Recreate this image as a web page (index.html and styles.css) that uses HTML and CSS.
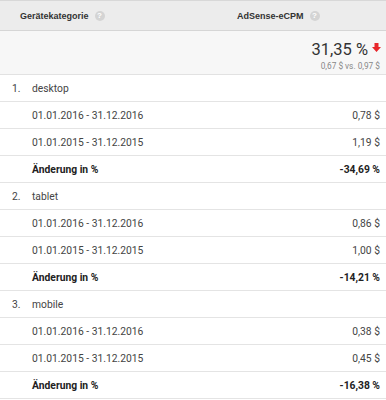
FILE: index.html
```html
<!DOCTYPE html>
<html>
<head>
<meta charset="utf-8">
<link rel="stylesheet" href="styles.css">
</head>
<body>
<div class="table">
  <div class="head">
    <div class="hcell h1">Gerätekategorie <span class="help">?</span></div>
    <div class="hcell h2">AdSense-eCPM <span class="help">?</span></div>
  </div>
  <div class="summary">
    <div class="big">31,35 % <svg class="arrow" width="9" height="9" viewBox="0 0 9 9"><path d="M2.5 0H6.5V4H9L4.5 9L0 4H2.5Z" fill="#e8262b"/></svg></div>
    <div class="small">0,67 $ vs. 0,97 $</div>
  </div>

  <div class="row"><span class="num">1.</span><span class="label">desktop</span></div>
  <div class="row"><span class="label">01.01.2016 - 31.12.2016</span><span class="val">0,78 $</span></div>
  <div class="row"><span class="label">01.01.2015 - 31.12.2015</span><span class="val">1,19 $</span></div>
  <div class="row bold"><span class="label">Änderung in %</span><span class="val">-34,69 %</span></div>

  <div class="row"><span class="num">2.</span><span class="label">tablet</span></div>
  <div class="row"><span class="label">01.01.2016 - 31.12.2016</span><span class="val">0,86 $</span></div>
  <div class="row"><span class="label">01.01.2015 - 31.12.2015</span><span class="val">1,00 $</span></div>
  <div class="row bold"><span class="label">Änderung in %</span><span class="val">-14,21 %</span></div>

  <div class="row"><span class="num">3.</span><span class="label">mobile</span></div>
  <div class="row"><span class="label">01.01.2016 - 31.12.2016</span><span class="val">0,38 $</span></div>
  <div class="row"><span class="label">01.01.2015 - 31.12.2015</span><span class="val">0,45 $</span></div>
  <div class="row bold"><span class="label">Änderung in %</span><span class="val">-16,38 %</span></div>
</div>
</body>
</html>
```
FILE: styles.css
```css
html, body {
  margin: 0;
  padding: 0;
  background: #fff;
}
body {
  font-family: Roboto, "Liberation Sans", Arial, sans-serif;
  color: #444;
  width: 386px;
  overflow: hidden;
}
.head {
  display: flex;
  height: 29px;
  align-items: center;
  background: #ececec;
  border-top: 1px solid #d8d8d8;
  border-bottom: 1px solid #d6d6d6;
}
.hcell {
  font-family: Arial, "Liberation Sans", sans-serif;
  font-weight: bold;
  font-size: 9px;
  color: #333;
  display: flex;
  align-items: center;
}
.h1 {
  padding-left: 20px;
  width: 217px;
}
.help {
  display: inline-flex;
  align-items: center;
  justify-content: center;
  width: 10px;
  height: 10px;
  border-radius: 50%;
  background: #d4d4d4;
  color: #fff;
  font-size: 8px;
  margin-left: 6px;
}
.summary {
  height: 43px;
  background: #f7f7f7;
  border-bottom: 1px solid #e2e2e2;
  display: flex;
  flex-direction: column;
  align-items: flex-end;
  padding-right: 5px;
}
.big {
  font-size: 16.5px;
  color: #333;
  margin-top: 9px;
  line-height: 19px;
  display: flex;
  align-items: center;
}
.arrow {
  margin-left: 4px;
  margin-top: -4px;
}
.small {
  font-size: 8.3px;
  color: #888;
  line-height: 12px;
  margin-right: 1px;
  margin-top: 1px;
}
.row {
  display: flex;
  align-items: center;
  height: 26px;
  border-bottom: 1px solid #e4e4e4;
  font-size: 10.3px;
  padding-left: 32px;
  padding-right: 6px;
  position: relative;
}
.num {
  position: absolute;
  left: 12px;
}
.label {
  flex: 1;
}
.val {
  text-align: right;
}
.bold {
  font-weight: bold;
  color: #222;
}
```
